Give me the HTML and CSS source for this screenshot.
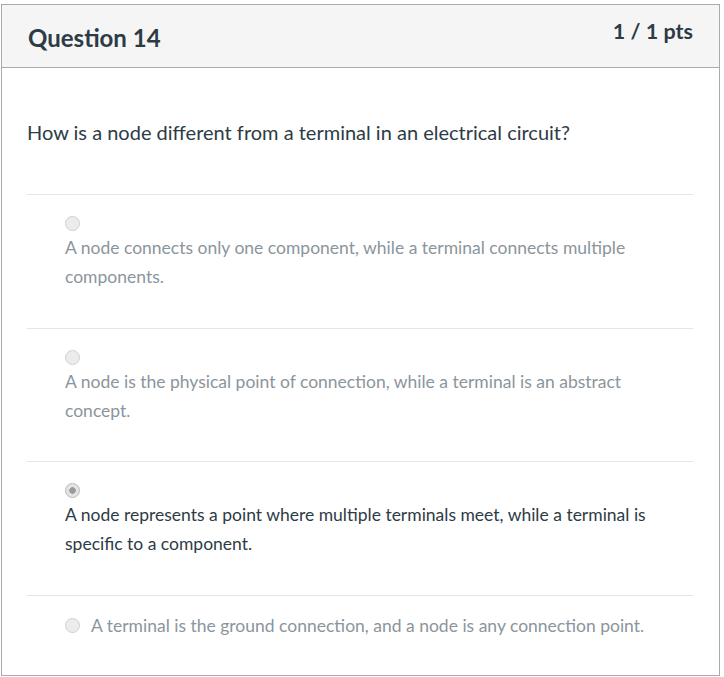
FILE: index.html
```html
<!DOCTYPE html>
<html>
<head>
<meta charset="utf-8">
<link rel="stylesheet" href="styles.css">
</head>
<body>
<div class="question">
  <div class="header">
    <h2 class="title">Question 14</h2>
    <div class="pts">1 / 1 pts</div>
  </div>
  <div class="content">
    <p class="qtext">How is a node different from a terminal in an electrical circuit?</p>
    <div class="answers">
      <div class="answer">
        <span class="radio"></span>
        <div class="atext">A node connects only one component, while a terminal connects multiple components.</div>
      </div>
      <div class="answer short">
        <span class="radio"></span>
        <div class="atext">A node is the physical point of connection, while a terminal is an abstract concept.</div>
      </div>
      <div class="answer selected">
        <span class="radio checked"></span>
        <div class="atext">A node represents a point where multiple terminals meet, while a terminal is specific to a component.</div>
      </div>
      <div class="answer inline">
        <span class="radio"></span>
        <div class="atext">A terminal is the ground connection, and a node is any connection point.</div>
      </div>
    </div>
  </div>
</div>
</body>
</html>
```

FILE: styles.css
```css
html, body {
  margin: 0;
  padding: 0;
  background: #fff;
}
body {
  font-family: Lato, "Liberation Sans", sans-serif;
  color: #2d3b45;
}
.question {
  box-sizing: border-box;
  width: 719px;
  height: 672px;
  margin: 4px 0 0 1px;
  border: 1px solid #aaaaaa;
}
.header {
  box-sizing: border-box;
  height: 63px;
  background: #f5f5f5;
  border-bottom: 1px solid #aaaaaa;
  display: flex;
  justify-content: space-between;
  align-items: flex-start;
  padding: 0 26px 0 26px;
}
.title {
  margin: 0;
  font-size: 24px;
  font-weight: 700;
  line-height: 30px;
  padding-top: 18px;
}
.pts {
  font-size: 21.5px;
  font-weight: 700;
  line-height: 26px;
  padding-top: 13px;
}
.content {
  padding: 0 26px 0 25px;
}
.qtext {
  margin: 0;
  padding-top: 50px;
  font-size: 20px;
  line-height: 28px;
}
.answers {
  margin-top: 48px;
}
.answer {
  border-top: 1px solid #e6e6e6;
  padding: 21px 20px 0 38px;
  height: 112px;
  color: #8b959c;
}
.answer.short {
  height: 111px;
}
.answer.selected {
  color: #2d3b45;
}
.radio {
  display: block;
  box-sizing: border-box;
  width: 15px;
  height: 15px;
  border-radius: 50%;
  border: 1px solid #d0d0d0;
  background: #ececec;
}
.radio.checked {
  background: radial-gradient(circle, #9a9a9a 0 3px, #e4e4e4 3.5px);
  border-color: #b8b8b8;
}
.atext {
  font-size: 17.5px;
  line-height: 29px;
  margin-top: 2px;
}
.answer.inline {
  display: flex;
  align-items: center;
  gap: 11px;
  height: auto;
  padding-top: 15px;
}
.answer.inline .atext {
  margin-top: 0;
}
```
